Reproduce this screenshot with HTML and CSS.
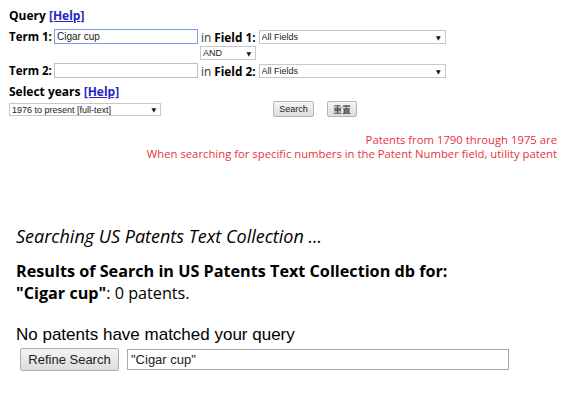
FILE: index.html
```html
<!DOCTYPE html>
<html>
  <head>
    <title>USPTO Patent Full-Text Database Boolean Search</title>
    <link rel="stylesheet" href="styles.css">
  </head>
  <body>
    <form id="searchForm" class="query-form">
      <div class="query-title">Query <a href="#">[Help]</a></div>

      <div class="term-row">
        <label class="term-label" for="term1">Term 1:</label>
        <input type="text" id="term1" class="term-input focused" value="Cigar cup" />
        <span class="field-label">in <b>Field 1:</b></span>
        <span class="select-wrap field-wrap">
          <select class="field-select">
            <option>All Fields</option>
          </select>
        </span>
      </div>

      <div class="op-row">
        <span class="select-wrap op-wrap">
          <select class="op-select">
            <option>AND</option>
          </select>
        </span>
      </div>

      <div class="term-row second">
        <label class="term-label" for="term2">Term 2:</label>
        <input type="text" id="term2" class="term-input" />
        <span class="field-label">in <b>Field 2:</b></span>
        <span class="select-wrap field-wrap">
          <select class="field-select">
            <option>All Fields</option>
          </select>
        </span>
      </div>

      <div class="years-title">Select years <a href="#">[Help]</a></div>
      <div class="years-row">
        <span class="select-wrap years-wrap">
          <select class="years-select">
            <option>1976 to present [full-text]</option>
          </select>
        </span>
        <button type="submit" class="btn-search">Search</button>
        <button type="reset" class="btn-reset">重置</button>
      </div>

      <div class="notes">
        <div>Patents from 1790 through 1975 are</div>
        <div>When searching for specific numbers in the Patent Number field, utility patent</div>
      </div>
    </form>

    <div class="results">
      <p class="searching">Searching US Patents Text Collection ...</p>
      <p class="result-head">
        <b>Results of Search in US Patents Text Collection db for:</b><br />
        <b>"Cigar cup"</b>: 0 patents.
      </p>
      <p class="no-match">No patents have matched your query</p>
      <form class="refine-form">
        <button type="submit" class="btn-refine">Refine Search</button>
        <input type="text" class="refine-input" value="&quot;Cigar cup&quot;" />
      </form>
    </div>
  </body>
</html>
```

FILE: styles.css
```css
body {
  margin: 0;
  padding: 8px 13px 0 9px;
  font-family: "Open Sans", "Noto Sans CJK SC", sans-serif;
  color: #000;
  background: #fff;
}

input,
select,
button {
  font-family: "Liberation Sans", Arial, sans-serif;
  box-sizing: border-box;
  margin: 0;
  color: #222;
}

.query-title,
.years-title {
  font-size: 12px;
  font-weight: bold;
  line-height: 16px;
  white-space: nowrap;
}

.query-title a,
.years-title a {
  color: #2424c8;
}

.term-row {
  display: flex;
  align-items: center;
  height: 15px;
  margin-top: 5px;
  white-space: nowrap;
}

.term-row.second {
  margin-top: 3px;
}

.term-label {
  flex-shrink: 0;
  width: 45px;
  font-size: 11.5px;
  font-weight: bold;
}

.term-input {
  flex-shrink: 0;
  width: 144px;
  height: 15px;
  padding: 0 2px;
  font-size: 10px;
  border: 1px solid #c0c0c0;
}

.term-input.focused {
  border-color: #7d9fe6;
}

.field-label {
  margin: 0 3px 0 3px;
  font-size: 11.8px;
  color: #333;
}

.field-label b {
  color: #000;
}

/* select boxes with the small black arrow */
.select-wrap {
  position: relative;
  display: block;
  flex-shrink: 0;
}

.select-wrap::after {
  content: "\25BC";
  position: absolute;
  right: 5px;
  top: 50%;
  transform: translateY(-50%);
  font-family: "DejaVu Sans", sans-serif;
  font-size: 6px;
  color: #111;
  pointer-events: none;
}

.select-wrap select {
  appearance: none;
  -webkit-appearance: none;
  display: block;
  height: 14px;
  font-size: 9px;
  line-height: 12px;
  padding: 0 0 0 2px;
  border: 1px solid #c8c8c8;
  border-radius: 0;
  background: #fff;
}

.field-select {
  width: 187px;
}

.op-row {
  display: flex;
  padding-left: 191px;
  margin-top: 2px;
}

.op-select {
  width: 56px;
}

.years-title {
  margin-top: 6px;
}

.years-row {
  display: flex;
  align-items: center;
  margin-top: 1px;
}

.years-select {
  width: 152px;
}

.years-wrap select {
  height: 13px;
}

.btn-search,
.btn-reset {
  height: 16px;
  font-size: 9px;
  padding: 0 4px;
  border: 1px solid #b4b4b4;
  border-radius: 2px;
  background: linear-gradient(#f6f6f6, #dcdcdc);
}

.btn-search {
  margin-left: 112px;
  width: 41px;
}

.btn-reset {
  margin-left: 13px;
  width: 30px;
  font-family: "Noto Sans CJK SC", sans-serif;
}

.notes {
  margin-top: 16px;
  text-align: right;
  font-size: 11.3px;
  line-height: 14px;
  color: #e8323c;
}

.results {
  padding-left: 7px;
  margin-top: 64px;
}

.searching {
  margin: 0;
  font-size: 18px;
  font-style: italic;
  line-height: 22px;
}

.result-head {
  margin: 13px 0 0;
  font-size: 16.2px;
  line-height: 22px;
}

.no-match {
  margin: 21px 0 0;
  font-family: "Liberation Sans", Arial, sans-serif;
  font-size: 17px;
  line-height: 20px;
}

.refine-form {
  display: flex;
  align-items: center;
  margin-top: 3px;
  padding-left: 4px;
}

.btn-refine {
  width: 99px;
  height: 23px;
  font-size: 13px;
  border: 1px solid #adadad;
  border-radius: 2px;
  background: linear-gradient(#f4f4f4, #dddddd);
}

.refine-input {
  width: 382px;
  height: 21px;
  margin-left: 8px;
  padding: 0 3px;
  font-size: 13px;
  border: 1px solid #a9a9a9;
}
```
